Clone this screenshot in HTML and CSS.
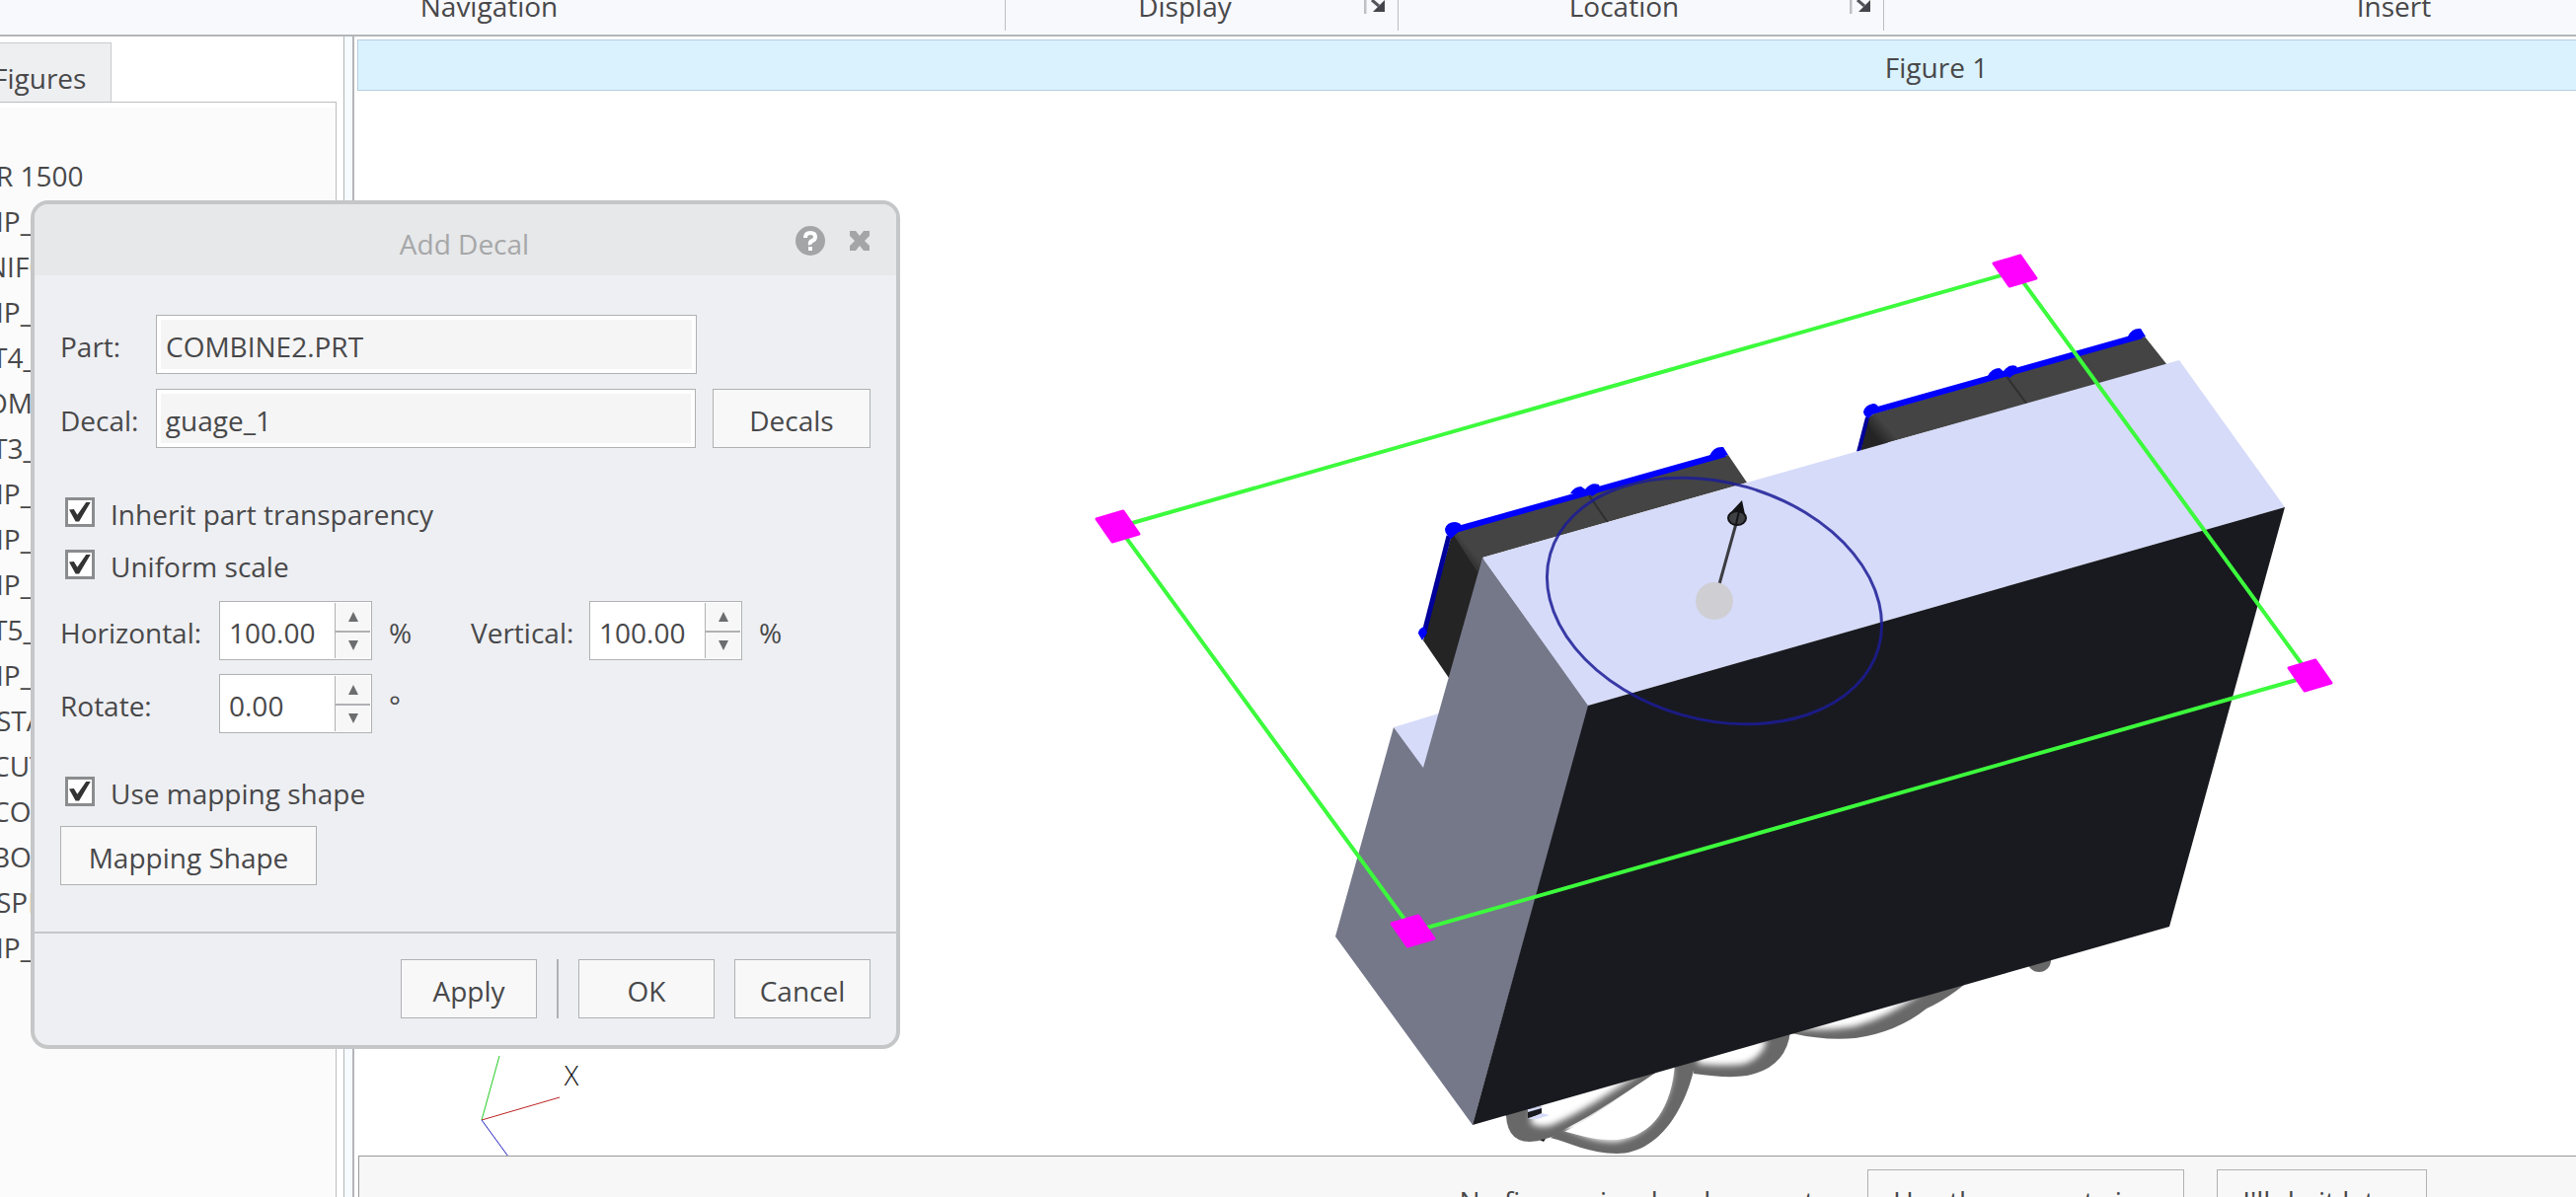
FILE: index.html
```html
<!DOCTYPE html>
<html lang="en">
<head>
<meta charset="utf-8">
<title>Add Decal</title>
<link rel="stylesheet" href="styles.css">
</head>
<body>
<header class="ribbon">
  <section class="group group-nav"><h2 class="group-label">Navigation</h2></section>
  <section class="group group-display">
    <h2 class="group-label">Display</h2>
    <button class="launcher" type="button" aria-label="Display options"><svg viewBox="0 0 24 16"><path d="M1 0v14" stroke="#bfc0c4" stroke-width="3"/><path d="M8 0l7 6" stroke="#55565c" stroke-width="3"/><path d="M21 0v12H9z" fill="#44454c"/></svg></button>
  </section>
  <section class="group group-location">
    <h2 class="group-label">Location</h2>
    <button class="launcher" type="button" aria-label="Location options"><svg viewBox="0 0 24 16"><path d="M1 0v14" stroke="#bfc0c4" stroke-width="3"/><path d="M8 0l7 6" stroke="#55565c" stroke-width="3"/><path d="M21 0v12H9z" fill="#44454c"/></svg></button>
  </section>
  <section class="group group-insert"><h2 class="group-label">Insert</h2></section>
</header>

<div class="workspace">
  <aside class="sidebar">
    <nav class="tabs"><button class="tab" type="button">Figures</button></nav>
    <ul class="tree">
      <li>R 1500</li>
      <li>IP_</li>
      <li class="deep">NIFO</li>
      <li>IP_</li>
      <li class="mid">T4_</li>
      <li class="deep">OM</li>
      <li class="mid">T3_</li>
      <li>IP_</li>
      <li>IP_</li>
      <li>IP_</li>
      <li class="mid">T5_</li>
      <li>IP_</li>
      <li>STA</li>
      <li class="mid">CUT</li>
      <li class="mid">CO</li>
      <li class="mid">BOS</li>
      <li>SPL</li>
      <li>IP_</li>
    </ul>
  </aside>
  <div class="splitter"></div>
  <main class="viewer">
    <h1 class="figure-bar">Figure 1</h1>
    <div class="canvas">
      <svg class="scene" viewBox="359 92 2251 1079" preserveAspectRatio="xMinYMin meet">
        <defs>
          <filter id="soft" x="-20%" y="-20%" width="140%" height="140%"><feGaussianBlur stdDeviation="3"/></filter>
          <linearGradient id="edge1" gradientUnits="userSpaceOnUse" x1="1478" y1="566" x2="1490" y2="556"><stop offset="0" stop-color="#242424"/><stop offset="1" stop-color="#444"/></linearGradient>
          <linearGradient id="edge2" gradientUnits="userSpaceOnUse" x1="1899" y1="441" x2="1911" y2="431"><stop offset="0" stop-color="#242424"/><stop offset="1" stop-color="#444"/></linearGradient>
        </defs>

        <!-- cables -->
        <g fill="#686868">
          <path d="M1815 1047Q1850 1055 1880 1052Q1922 1046 1952 1022Q1970 1014 1990 998L1950 1000L1900 1010Z"/>
          <path d="M1716 1088Q1750 1093 1770 1090Q1810 1082 1814 1045L1780 1045L1716 1070Z"/>
          <path d="M1571 1153C1590 1158 1612 1169 1638 1169C1685 1169 1712 1115 1719 1070L1697 1078C1694 1120 1676 1152 1638 1155C1615 1156 1600 1150 1583 1146Z"/>
          <path d="M1526 1122Q1524 1157 1550 1157C1590 1155 1640 1110 1682 1084L1660 1086L1548 1120Z"/>
          <circle cx="2066" cy="973" r="12"/>
        </g>
        <g fill="#fff" filter="url(#soft)">
          <path d="M1815 1042Q1855 1045 1880 1040Q1915 1030 1945 1007L1900 1000L1815 1030Z"/>
          <path d="M1720 1078Q1750 1081 1768 1078Q1788 1070 1790 1052L1720 1060Z"/>
          <path d="M1580 1140C1600 1150 1618 1158 1638 1157C1675 1150 1693 1115 1695 1082L1690 1082C1650 1100 1620 1130 1580 1140Z"/>
        </g>
        <path d="M1564 1153C1592 1145 1640 1112 1682 1084L1668 1086C1640 1108 1600 1130 1560 1140Z" fill="#686868"/>
        <path d="M1551 1138Q1560 1144 1573 1140C1605 1126 1630 1108 1662 1087L1600 1095L1553 1115Z" fill="#fff" filter="url(#soft)"/>
        <path d="M1548 1124l14-3v8l-14 4z" fill="#191a1f"/>
        <path d="M1548 1124l14-3v2l-14 4zM1548 1134l14-6 8 2-12 4z" fill="#d6dbf9"/>
        <path d="M1560 1155l6-1-2 3z" fill="#191a1f"/>

        <!-- gauges behind the body -->
        <g>
          <path d="M1471 541L1442 649L1468 687L1510 600L1502 560Z" fill="#242424"/>
          <path d="M1472 541L1478 538L1751 461L1770 489L1502 565L1497 580Z" fill="url(#edge1)"/>
          <path d="M1610 502L1630 531" stroke="#2f2f2f" stroke-width="2"/>
          <path d="M1468 543L1442 645" stroke="#00009a" stroke-width="5"/>
          <path d="M1474 537L1748 460" stroke="#00f" stroke-width="6"/>
          <path d="M1464 536Q1466 529 1474 529Q1480 529 1482 535L1470 546Q1464 541 1464 536ZM1437 642Q1437 637 1443 635L1446 641L1441 649ZM1591 500Q1595 493 1602 493L1612 500L1607 501ZM1606 496Q1612 488 1620 491L1622 497L1613 503ZM1732 462Q1736 452 1746 453L1751 461L1740 464Z" fill="#00f"/>
        </g>
        <g>
          <path d="M1892 424L1885 458L1914 450Z" fill="#242424"/>
          <path d="M1892 424L1899 419L2173 341L2196 370L1900 452Z" fill="url(#edge2)"/>
          <path d="M2032 380L2054 410" stroke="#2f2f2f" stroke-width="2"/>
          <path d="M1892 423L1883 458" stroke="#00009a" stroke-width="4"/>
          <path d="M1896 417L2170 340" stroke="#00f" stroke-width="6"/>
          <path d="M1888 417Q1890 410 1898 409Q1902 409 1904 414L1893 424Q1888 421 1888 417ZM2014 381Q2018 373 2026 373L2035 381L2030 382ZM2030 376Q2036 368 2043 371L2045 376L2036 383ZM2156 341Q2160 332 2169 333L2174 341L2162 344Z" fill="#00f"/>
        </g>

        <!-- body -->
        <path d="M1412 737L1458 723L1462 740L1442 779Z" fill="#d6dbf9"/>
        <path d="M1502 565L1610 715L1492 1140L1353 949L1412 737L1442 778Z" fill="#757889"/>
        <path d="M1502 565L2208 365L2315 514L1609 715Z" fill="#d6dbf9"/>
        <path d="M1609 715L2315 514L2198 939L1492 1140Z" fill="#191a1f"/>

        <!-- mapping shape -->
        <ellipse cx="1737" cy="609" rx="173" ry="120" transform="rotate(16 1737 609)" fill="none" stroke="#1c1c96" stroke-opacity=".85" stroke-width="3"/>
        <path d="M1742 592L1760 527" stroke="#3c3d42" stroke-width="3"/>
        <circle cx="1737" cy="609" r="19" fill="#cfcfd3"/>
        <path d="M1765 507L1769 526L1751 522Z" fill="#131316"/>
        <ellipse cx="1760" cy="525" rx="9" ry="7" fill="#3f4044" stroke="#131316" stroke-width="2"/>
        <path d="M1762 518L1759 531" stroke="#131316" stroke-width="2"/>

        <!-- decal frame -->
        <path d="M1133 534L2042 275L2341 685L1432 944Z" fill="none" stroke="#3cfa3c" stroke-width="4"/>
        <g fill="#f0f" stroke="#f0f" stroke-width="3" stroke-linejoin="round">
          <path d="M1111 526l27-8 16 23-27 8z"/>
          <path d="M2020 267l27-8 16 23-27 8z"/>
          <path d="M2319 677l27-8 16 23-27 8z"/>
          <path d="M1410 936l27-8 16 23-27 8z"/>
        </g>

        <!-- view axes -->
        <g stroke-width="1" fill="none">
          <path d="M488 1135L506 1070" stroke="#2c2"/>
          <path d="M488 1135L567 1112" stroke="#b22"/>
          <path d="M488 1135L515 1172" stroke="#22b"/>
        </g>
        <text class="axis-name" x="579" y="1100" text-anchor="middle">X</text>
      </svg>
    </div>
    <footer class="message-bar">
      <p class="message">No figure view has been set</p>
      <button class="button" type="button">Use the current view</button>
      <button class="button" type="button">I'll do it later</button>
    </footer>
  </main>
</div>

<form class="dialog" role="dialog" aria-labelledby="dialog-title">
  <div class="dialog-head">
    <h2 class="dialog-title" id="dialog-title">Add Decal</h2>
    <button class="icon-button" type="button" aria-label="Help"><svg width="30" height="30" viewBox="0 0 30 30"><circle cx="15" cy="15" r="15" fill="#a4a5a6"/><path d="M10 12q0-5 5-5t5 4q0 3-3 4t-2 4" fill="none" stroke="#fff" stroke-width="4"/><path d="M13 21h4v4h-4z" fill="#fff"/></svg></button>
    <button class="icon-button" type="button" aria-label="Close"><svg width="22" height="20" viewBox="0 0 22 20"><path d="M1 0h6l4 5 4-5h6v5l-5 5 5 5v5h-6l-4-5-4 5H1v-5l5-5-5-5z" fill="#a4a5a6"/></svg></button>
  </div>
  <div class="dialog-body">
    <div class="field">
      <label class="name" for="part">Part:</label>
      <input class="text" id="part" type="text" value="COMBINE2.PRT" readonly>
    </div>
    <div class="field">
      <label class="name" for="decal">Decal:</label>
      <input class="text" id="decal" type="text" value="guage_1" readonly>
      <button class="button button-decals" type="button">Decals</button>
    </div>
    <div class="checks">
      <label class="check"><input type="checkbox" checked><span>Inherit part transparency</span></label>
      <label class="check"><input type="checkbox" checked><span>Uniform scale</span></label>
    </div>
    <div class="numbers">
      <label class="name" for="horizontal">Horizontal:</label>
      <div class="spinner">
        <input id="horizontal" type="text" value="100.00">
        <button type="button" aria-label="Increase horizontal"><svg viewBox="0 0 12 12"><path d="M6 0l6 12H0z"/></svg></button>
        <button type="button" aria-label="Decrease horizontal"><svg viewBox="0 0 12 12"><path d="M0 0h12L6 12z"/></svg></button>
      </div>
      <span class="unit">%</span>
      <label class="name" for="vertical">Vertical:</label>
      <div class="spinner">
        <input id="vertical" type="text" value="100.00">
        <button type="button" aria-label="Increase vertical"><svg viewBox="0 0 12 12"><path d="M6 0l6 12H0z"/></svg></button>
        <button type="button" aria-label="Decrease vertical"><svg viewBox="0 0 12 12"><path d="M0 0h12L6 12z"/></svg></button>
      </div>
      <span class="unit">%</span>
      <label class="name" for="rotate">Rotate:</label>
      <div class="spinner">
        <input id="rotate" type="text" value="0.00">
        <button type="button" aria-label="Increase rotation"><svg viewBox="0 0 12 12"><path d="M6 0l6 12H0z"/></svg></button>
        <button type="button" aria-label="Decrease rotation"><svg viewBox="0 0 12 12"><path d="M0 0h12L6 12z"/></svg></button>
      </div>
      <span class="unit">°</span>
    </div>
    <div class="mapping">
      <label class="check"><input type="checkbox" checked><span>Use mapping shape</span></label>
      <button class="button button-mapping" type="button">Mapping Shape</button>
    </div>
  </div>
  <div class="dialog-foot">
    <button class="button button-action" type="button">Apply</button>
    <span class="divider"></span>
    <button class="button button-action" type="submit">OK</button>
    <button class="button button-action" type="button">Cancel</button>
  </div>
</form>
</body>
</html>
```

FILE: styles.css
```css
* {
  box-sizing: border-box;
}

body {
  display: flex;
  flex-direction: column;
  height: 100vh;
  margin: 0;
  overflow: hidden;
  background: #fff;
  color: #48484a;
  font: 28px/36px "Open Sans", "Noto Sans", sans-serif;
}

h1, h2, p, ul {
  margin: 0;
  padding: 0;
  font-size: inherit;
  font-weight: 400;
}

button, input {
  margin: 0;
  padding: 0;
  border: 0;
  background: none;
  color: inherit;
  font: inherit;
}

/* ribbon */
.ribbon {
  display: flex;
  flex: none;
  height: 37px;
  padding-bottom: 4px;
  overflow: hidden;
  border-bottom: 2px solid #b4b5b8;
  background: #f8f9fc;
}

.group {
  display: flex;
  flex: none;
  align-items: flex-end;
  border-right: 1px solid #bcbdc2;
}

.group-nav {
  width: 1046px;
  margin-left: -27px;
}

.group-display {
  width: 398px;
}

.group-location {
  width: 492px;
}

.group-insert {
  width: 1034px;
}

.group-label {
  flex: 1;
  padding-bottom: 7px;
  text-align: center;
}

.launcher {
  align-self: flex-start;
  width: 24px;
  height: 16px;
  margin-right: 10px;
}

.launcher svg {
  display: block;
}

/* sidebar */
.workspace {
  display: flex;
  flex: 1;
  min-height: 0;
}

.sidebar {
  display: flex;
  flex-direction: column;
  flex: none;
  width: 348px;
  padding: 6px 7px 0 0;
}

.tabs {
  display: flex;
}

.tab {
  height: 60px;
  margin-left: -8px;
  padding: 10px 25px 0 0;
  border: 1px solid #c9cacc;
  border-bottom: 0;
  background: #eeeff1;
}

.tree {
  flex: 1;
  padding-top: 51px;
  overflow: hidden;
  border: 1px solid #bcbdc0;
  border-width: 1px 1px 0 0;
  background: #fbfbfb;
  box-shadow: inset 0 5px #fff;
  list-style: none;
}

.tree li {
  height: 46px;
  line-height: 46px;
  text-indent: -4px;
}

.tree .mid {
  text-indent: -8px;
}

.tree .deep {
  text-indent: -14px;
}

.splitter {
  flex: none;
  width: 11px;
  border: 1px solid #b4b5b8;
  border-width: 0 2px 0 1px;
  background: #f5fbff;
}

/* viewer */
.viewer {
  display: flex;
  flex-direction: column;
  flex: 1;
  min-width: 0;
  padding-top: 3px;
  overflow: hidden;
}

.figure-bar {
  flex: none;
  height: 52px;
  margin: 0 -952px 0 3px;
  border: 1px solid #b4cfe2;
  background: #daf2fe;
  line-height: 54px;
  text-align: center;
}

.canvas {
  flex: 1;
  min-height: 0;
  overflow: hidden;
}

.scene {
  display: block;
  width: 100%;
}

.axis-name {
  fill: #111;
  font: 300 27px "Open Sans", sans-serif;
}

.message-bar {
  display: flex;
  flex: none;
  align-items: flex-start;
  height: 42px;
  margin-left: 4px;
  padding: 13px 151px 0 0;
  justify-content: flex-end;
  border: 1px solid #999;
  border-width: 1px 0 0 1px;
  background: #f7f7f7;
}

.message {
  margin: 14px 54px 0 0;
}

.message-bar .button + .button {
  margin-left: 33px;
}

/* shared controls */
.button {
  flex: none;
  height: 60px;
  padding: 4px 25px 0;
  border: 1px solid #b0b1b3;
  background: #f8f8f8;
}

.name, .unit, .check span {
  padding-top: 4px;
}

/* dialog */
.dialog {
  position: absolute;
  top: 203px;
  left: 31px;
  width: 881px;
  overflow: hidden;
  border: 4px solid #c5c6c8;
  border-radius: 18px;
  background: #eeeff2;
}

.dialog-head {
  display: flex;
  align-items: center;
  gap: 24px;
  height: 72px;
  padding: 2px 26px 0;
  background: #e7e8ea;
}

.dialog-title {
  flex: 1;
  padding: 5px 0 0 98px;
  color: #a6a7a8;
  text-align: center;
}

.icon-button svg {
  display: block;
}

.dialog-body {
  padding: 40px 26px 47px;
}

.field {
  display: flex;
  align-items: center;
  height: 60px;
  margin-bottom: 15px;
}

.field .name {
  width: 97px;
}

.text {
  width: 548px;
  height: 60px;
  padding: 4px 9px 0;
  border: 1px solid #b0b1b3;
  background: #f5f5f5;
  box-shadow: inset 0 0 0 4px #fff;
}

.button-decals {
  width: 160px;
  margin-left: 17px;
  padding: 4px 0 0;
}

.checks {
  padding: 23px 0 11px;
}

.check {
  display: flex;
  align-items: center;
  gap: 16px;
  height: 53px;
  padding-left: 5px;
}

.check input {
  display: grid;
  width: 30px;
  height: 30px;
  appearance: none;
  place-items: center;
  border: 3px solid #8b8c8e;
  background: #fff;
}

.check input:checked::before {
  width: 22px;
  height: 20px;
  background: #333;
  clip-path: polygon(0 40%, 22% 38%, 38% 66%, 80% 0, 100% 0, 46% 100%, 30% 100%);
  content: "";
}

.numbers {
  display: grid;
  grid-template-columns: 161px 155px 100px 120px 155px 1fr;
  align-items: center;
  row-gap: 14px;
}

.unit {
  padding-left: 17px;
}

.spinner {
  display: grid;
  grid-template: 1fr 1fr / 1fr 37px;
  height: 60px;
  border: 1px solid #b0b1b3;
  background: #fff;
}

.spinner input {
  grid-row: 1 / 3;
  min-width: 0;
  padding: 4px 0 0 9px;
}

.spinner button {
  margin: 1px 1px 0 0;
  border-left: 1px solid #b0b1b3;
  background: #f7f7f7;
}

.spinner button + button {
  margin: 0 1px 1px 0;
  border-top: 2px solid #b0b1b3;
}

.spinner svg {
  display: block;
  width: 12px;
  height: 10px;
  margin: 0 auto;
  fill: #6c6d6f;
}

.mapping {
  padding-top: 32px;
}

.button-mapping {
  width: 260px;
  margin-top: 9px;
}

.dialog-foot {
  display: flex;
  justify-content: flex-end;
  gap: 20px;
  padding: 26px 26px 27px;
  border-top: 2px solid #c5c6c8;
}

.button-action {
  width: 138px;
  padding: 4px 0 0;
}

.divider {
  width: 2px;
  background: #b0b1b3;
}
```
